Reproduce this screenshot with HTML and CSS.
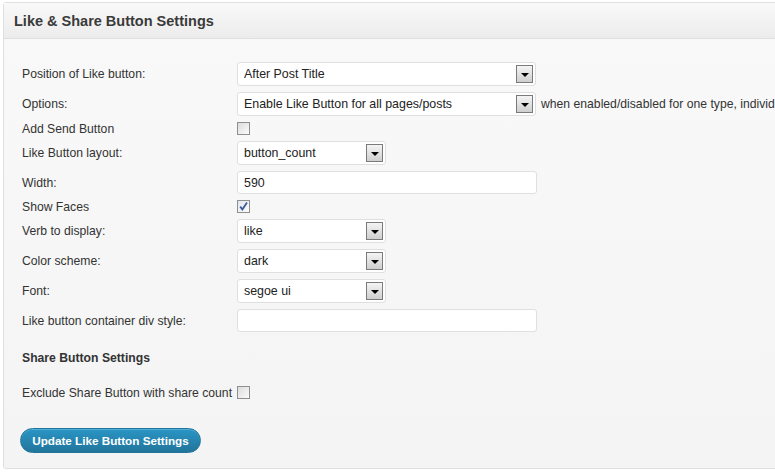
FILE: index.html
```html
<!DOCTYPE html>
<html>
<head>
<meta charset="utf-8">
<link rel="stylesheet" href="styles.css">
</head>
<body>
<div class="panel">
  <div class="panel-head"><h3>Like &amp; Share Button Settings</h3></div>
  <div class="panel-body">
    <div class="rows">
      <div class="row r-select"><span class="label">Position of Like button:</span><div class="select wide"><span>After Post Title</span><i class="arrow"></i></div></div>
      <div class="row r-select"><span class="label">Options:</span><div class="select wide"><span>Enable Like Button for all pages/posts</span><i class="arrow"></i></div><span class="note">when enabled/disabled for one type, individual posts/pages can be configured</span></div>
      <div class="row r-check"><span class="label">Add Send Button</span><span class="checkbox"></span></div>
      <div class="row r-select"><span class="label">Like Button layout:</span><div class="select narrow"><span>button_count</span><i class="arrow"></i></div></div>
      <div class="row r-input"><span class="label">Width:</span><div class="input"><span>590</span></div></div>
      <div class="row r-check"><span class="label">Show Faces</span><span class="checkbox checked"><svg viewBox="0 0 11 11" width="11" height="11"><path d="M2.2 5.6 L4.4 8.4 L9 1.6" fill="none" stroke="#3b5a9a" stroke-width="1.8"/></svg></span></div>
      <div class="row r-select"><span class="label">Verb to display:</span><div class="select narrow"><span>like</span><i class="arrow"></i></div></div>
      <div class="row r-select"><span class="label">Color scheme:</span><div class="select narrow"><span>dark</span><i class="arrow"></i></div></div>
      <div class="row r-select"><span class="label">Font:</span><div class="select narrow"><span>segoe ui</span><i class="arrow"></i></div></div>
      <div class="row r-input"><span class="label">Like button container div style:</span><div class="input"></div></div>
    </div>
    <h4 class="sub">Share Button Settings</h4>
    <div class="exclude"><span>Exclude Share Button with share count</span><span class="checkbox"></span></div>
    <button class="primary">Update Like Button Settings</button>
  </div>
</div>
</body>
</html>
```
FILE: styles.css
```css
html, body {
  margin: 0;
  padding: 0;
  background: #fff;
  overflow: hidden;
  width: 775px;
  height: 472px;
}
body {
  font-family: "Liberation Sans", Arial, sans-serif;
  font-size: 12.2px;
  color: #333;
}
.panel {
  margin: 2px 0 0 3px;
  width: 820px;
  border: 1px solid #dfdfdf;
  border-radius: 3px;
  background: linear-gradient(#f9f9f9, #f4f4f4);
}
.panel-head {
  height: 35px;
  border-bottom: 1px solid #dfdfdf;
  background: linear-gradient(#f9f9f9, #ececec);
  display: flex;
  align-items: center;
  padding-left: 10px;
}
.panel-head h3 {
  margin: 0;
  font-size: 14.5px;
  font-weight: bold;
  color: #3a3a3a;
}
.panel-body {
  padding: 23px 0 15px 16px;
}
.rows {
  display: flex;
  flex-direction: column;
  gap: 6px;
  padding-left: 2px;
}
.row {
  display: flex;
  align-items: center;
  white-space: nowrap;
}
.r-select { height: 24px; }
.r-input { height: 23px; }
.r-check { height: 13px; }
.label {
  width: 215px;
  flex: none;
  color: #333;
}
.select {
  box-sizing: border-box;
  height: 24px;
  background: #fff;
  border: 1px solid #dfdfdf;
  border-radius: 3px;
  display: flex;
  align-items: center;
  justify-content: space-between;
  padding: 0 2px 0 6px;
  font-size: 12.4px;
  color: #222;
  flex: none;
}
.select.wide { width: 299px; }
.select.narrow { width: 149px; }
.arrow {
  box-sizing: border-box;
  width: 17px;
  height: 18px;
  border: 1px solid #7a7a7a;
  background: linear-gradient(#f4f4f4, #cfcfcf);
  position: relative;
}
.arrow::after {
  content: "";
  position: absolute;
  left: 4px;
  top: 7px;
  border-left: 4px solid transparent;
  border-right: 4px solid transparent;
  border-top: 4px solid #000;
}
.note {
  margin-left: 5px;
  color: #333;
}
.input {
  box-sizing: border-box;
  width: 300px;
  height: 23px;
  background: #fff;
  border: 1px solid #dfdfdf;
  border-radius: 3px;
  display: flex;
  align-items: center;
  padding-left: 6px;
  font-size: 12.4px;
  color: #222;
}
.checkbox {
  box-sizing: border-box;
  width: 13px;
  height: 13px;
  border: 1px solid #8e8f8f;
  background: linear-gradient(135deg, #dcdcdc, #fbfbfb);
  display: inline-flex;
  align-items: center;
  justify-content: center;
  flex: none;
}
.checkbox.checked {
  background: linear-gradient(135deg, #e2e6ee, #fbfbfb);
}
.sub {
  margin: 19px 0 0 2px;
  font-size: 12.2px;
  font-weight: bold;
  color: #333;
  line-height: 15px;
}
.exclude {
  margin: 20px 0 0 2px;
  display: flex;
  align-items: center;
  gap: 5px;
  height: 13px;
}
.primary {
  margin-top: 29px;
  width: 181px;
  height: 25px;
  border: 1px solid #21759b;
  border-radius: 13px;
  background: linear-gradient(#2a95c5, #21759b);
  color: #fff;
  font-family: "Liberation Sans", Arial, sans-serif;
  font-size: 11.7px;
  font-weight: bold;
  padding: 0;
  box-shadow: inset 0 1px 0 rgba(120, 200, 230, 0.5);
}
```
